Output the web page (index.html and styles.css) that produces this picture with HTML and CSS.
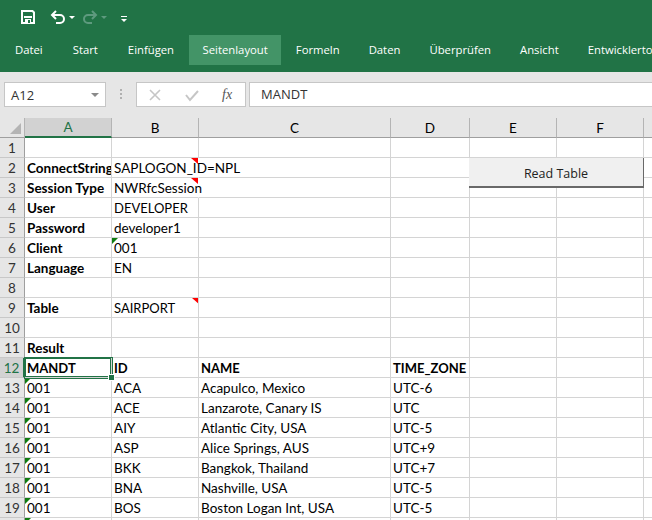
FILE: index.html
```html
<!DOCTYPE html>
<html>
  <head>
    <title>Excel</title>
    <link rel="stylesheet" href="styles.css">
  </head>
  <body>
    <div class="app">
      <!-- Quick access -->
      <div class="quick">
        <svg class="q-save" width="16" height="16" viewBox="0 0 16 16">
          <path d="M2 2h10.5L14 3.5V14H2z" fill="none" stroke="#fff" stroke-width="2"/>
          <rect x="4" y="7" width="8" height="2" fill="#fff"/>
          <rect x="5" y="10" width="6" height="4" fill="#fff"/>
          <rect x="8" y="11" width="2" height="3" fill="#217346"/>
        </svg>
        <svg class="q-undo" width="16" height="14" viewBox="0 0 16 14">
          <path d="M2 5h8a4 4 0 0 1 0 8H6" fill="none" stroke="#fff" stroke-width="2"/>
          <path d="M6 1L2 5l4 4" fill="none" stroke="#fff" stroke-width="2"/>
        </svg>
        <span class="q-arrow"></span>
        <svg class="q-redo" width="16" height="14" viewBox="0 0 16 14">
          <path d="M14 5H6a4 4 0 0 0 0 8h4" fill="none" stroke="#5e9a7e" stroke-width="2"/>
          <path d="M10 1l4 4-4 4" fill="none" stroke="#5e9a7e" stroke-width="2"/>
        </svg>
        <span class="q-arrow dim"></span>
        <span class="q-custom"></span>
      </div>

      <!-- Ribbon tabs -->
      <div class="tabs">
        <span class="tab roomy">Datei</span>
        <span class="tab roomy">Start</span>
        <span class="tab roomy">Einfügen</span>
        <span class="tab active">Seitenlayout</span>
        <span class="tab">Formeln</span>
        <span class="tab">Daten</span>
        <span class="tab">Überprüfen</span>
        <span class="tab">Ansicht</span>
        <span class="tab">Entwicklertools</span>
      </div>

      <!-- Formula bar -->
      <div class="formula-bar">
        <div class="name-box">
          <span>A12</span>
          <span class="name-arrow"></span>
        </div>
        <div class="dots"></div>
        <div class="fx-box">
          <svg width="14" height="14" viewBox="0 0 14 14">
            <path d="M2 2l10 10M12 2L2 12" fill="none" stroke="#c6c6c6" stroke-width="1.6"/>
          </svg>
          <svg width="14" height="14" viewBox="0 0 14 14">
            <path d="M1 7l4 5 8-9" fill="none" stroke="#c6c6c6" stroke-width="2"/>
          </svg>
          <span class="fx">fx</span>
        </div>
        <div class="formula-input">MANDT</div>
      </div>

      <!-- Sheet -->
      <div class="sheet">
        <table class="grid">
          <colgroup>
            <col class="col-rh"><col class="col-a"><col class="col-b"><col class="col-c">
            <col class="col-d"><col class="col-e"><col class="col-f"><col class="col-g">
          </colgroup>
          <tr class="head">
            <th class="corner"><span class="corner-mark"></span></th>
            <th class="sel-col">A</th><th>B</th><th>C</th><th>D</th><th>E</th><th>F</th><th></th>
          </tr>
          <tr><th>1</th><td></td><td></td><td></td><td></td><td></td><td></td><td></td></tr>
          <tr><th>2</th><td class="b">ConnectString</td><td class="over"><span class="txt">SAPLOGON_ID=NPL</span><i class="note"></i></td><td></td><td></td><td></td><td></td><td></td></tr>
          <tr><th>3</th><td class="b">Session Type</td><td class="over"><span class="txt">NWRfcSession</span><i class="note"></i></td><td></td><td></td><td></td><td></td><td></td></tr>
          <tr><th>4</th><td class="b">User</td><td class="caps">DEVELOPER</td><td></td><td></td><td></td><td></td><td></td></tr>
          <tr><th>5</th><td class="b">Password</td><td>developer1</td><td></td><td></td><td></td><td></td><td></td></tr>
          <tr><th>6</th><td class="b">Client</td><td><i class="flag"></i>001</td><td></td><td></td><td></td><td></td><td></td></tr>
          <tr><th>7</th><td class="b">Language</td><td>EN</td><td></td><td></td><td></td><td></td><td></td></tr>
          <tr><th>8</th><td></td><td></td><td></td><td></td><td></td><td></td><td></td></tr>
          <tr><th>9</th><td class="b">Table</td><td class="caps">SAIRPORT<i class="note"></i></td><td></td><td></td><td></td><td></td><td></td></tr>
          <tr><th>10</th><td></td><td></td><td></td><td></td><td></td><td></td><td></td></tr>
          <tr><th>11</th><td class="b">Result</td><td></td><td></td><td></td><td></td><td></td><td></td></tr>
          <tr><th class="sel-row">12</th><td class="b caps selected">MANDT<i class="handle"></i></td><td class="b caps">ID</td><td class="b caps">NAME</td><td class="b caps">TIME_ZONE</td><td></td><td></td><td></td></tr>
          <tr><th>13</th><td><i class="flag"></i>001</td><td>ACA</td><td>Acapulco, Mexico</td><td>UTC-6</td><td></td><td></td><td></td></tr>
          <tr><th>14</th><td><i class="flag"></i>001</td><td>ACE</td><td>Lanzarote, Canary IS</td><td>UTC</td><td></td><td></td><td></td></tr>
          <tr><th>15</th><td><i class="flag"></i>001</td><td>AIY</td><td>Atlantic City, USA</td><td>UTC-5</td><td></td><td></td><td></td></tr>
          <tr><th>16</th><td><i class="flag"></i>001</td><td>ASP</td><td>Alice Springs, AUS</td><td>UTC+9</td><td></td><td></td><td></td></tr>
          <tr><th>17</th><td><i class="flag"></i>001</td><td>BKK</td><td>Bangkok, Thailand</td><td>UTC+7</td><td></td><td></td><td></td></tr>
          <tr><th>18</th><td><i class="flag"></i>001</td><td>BNA</td><td>Nashville, USA</td><td>UTC-5</td><td></td><td></td><td></td></tr>
          <tr><th>19</th><td><i class="flag"></i>001</td><td>BOS</td><td>Boston Logan Int, USA</td><td>UTC-5</td><td></td><td></td><td></td></tr>
          <tr><th></th><td><i class="flag"></i></td><td></td><td></td><td></td><td></td><td></td><td></td></tr>
        </table>
        <button class="read-btn">Read Table</button>
      </div>
    </div>
  </body>
</html>
```

FILE: styles.css
```css
html,
body {
  margin: 0;
  height: 100%;
  overflow: hidden;
}

body {
  background-color: #fff;
  font-family: "Open Sans", sans-serif;
}

.app {
  width: 652px;
  height: 520px;
  display: flex;
  flex-direction: column;
  overflow: hidden;
}

/* Quick access */
.quick {
  height: 35px;
  background-color: #217346;
  display: flex;
  align-items: center;
  padding-left: 20px;
  box-sizing: border-box;
  padding-bottom: 1px;
}

.q-undo {
  margin-left: 14px;
}

.q-redo {
  margin-left: 7px;
}

.q-arrow {
  width: 0;
  height: 0;
  margin-left: 3px;
  border: 3px solid transparent;
  border-top: 3px solid #fff;
  border-bottom: none;
}

.q-arrow.dim {
  border-top-color: #5e9a7e;
}

.q-custom {
  width: 6px;
  height: 1px;
  margin-left: 14px;
  border-top: 1px solid #fff;
  position: relative;
}

.q-custom::after {
  content: "";
  position: absolute;
  left: 0;
  top: 2px;
  border: 3px solid transparent;
  border-top: 3px solid #fff;
  border-bottom: none;
}

/* Ribbon tabs */
.tabs {
  height: 37px;
  background-color: #217346;
  display: flex;
  align-items: stretch;
  box-sizing: border-box;
  padding-bottom: 7px;
  white-space: nowrap;
}

.tab {
  color: #fff;
  font-size: 11.3px;
  line-height: 30px;
  padding: 0 14.5px;
}

.tab.roomy {
  padding: 0 15px;
}

.tab.active {
  background-color: #439467;
  padding: 0 13.5px;
}

/* Formula bar */
.formula-bar {
  height: 46px;
  background-color: #e6e6e6;
  display: flex;
  padding: 10px 0 11px 4px;
  box-sizing: border-box;
}

.name-box {
  width: 102px;
  box-sizing: border-box;
  background-color: #fff;
  border: 1px solid #c6c6c6;
  display: flex;
  align-items: center;
  justify-content: space-between;
  padding: 0 3px 0 6px;
  font-size: 13px;
  color: #333;
}

.name-arrow {
  width: 0;
  height: 0;
  margin-right: 3px;
  border: 4px solid transparent;
  border-top: 4px solid #8a8a8a;
  border-bottom: none;
}

.dots {
  width: 2px;
  height: 11px;
  margin: 7px 14px 0 14px;
  background-image: linear-gradient(#b0b0b0 2px, transparent 2px);
  background-size: 2px 4px;
}

.fx-box {
  width: 110px;
  box-sizing: border-box;
  background-color: #fff;
  border: 1px solid #c6c6c6;
  display: flex;
  align-items: center;
  gap: 23px;
  padding-left: 11px;
}

.fx {
  font-family: "Liberation Serif", serif;
  font-style: italic;
  font-size: 14px;
  color: #555;
}

.formula-input {
  flex: 1;
  margin-left: 3px;
  background-color: #fff;
  border: 1px solid #c6c6c6;
  border-right: none;
  padding-left: 11px;
  font-size: 13px;
  line-height: 23px;
  color: #333;
}

/* Sheet */
.sheet {
  position: relative;
  flex: 1;
  overflow: hidden;
}

.grid {
  table-layout: fixed;
  border-collapse: separate;
  border-spacing: 0;
  width: 660px;
  font-family: Lato, sans-serif;
  font-size: 13.5px;
  color: #000;
}

.col-rh { width: 25px; }
.col-a { width: 87px; }
.col-b { width: 87px; }
.col-c { width: 192px; }
.col-d { width: 79px; }
.col-e { width: 87px; }
.col-f { width: 87px; }
.col-g { width: 16px; }

.grid tr {
  height: 20px;
}

.grid td,
.grid th {
  box-sizing: border-box;
  height: 20px;
  padding: 0;
  position: relative;
  white-space: nowrap;
  overflow: hidden;
}

.grid td {
  padding-left: 2px;
  border-right: 1px solid #d4d4d4;
  border-bottom: 1px solid #d4d4d4;
}

.grid th {
  background-color: #e6e6e6;
  font-weight: normal;
  text-align: center;
  color: #333;
  border-right: 1px solid #9f9f9f;
  border-bottom: 1px solid #c8c8c8;
}

.head th {
  border-right: 1px solid #b4b4b4;
  border-bottom: 1px solid #9f9f9f;
  color: #000;
}

.b {
  font-weight: bold;
}

.grid td.caps {
  font-size: 13px;
}

.grid td.over {
  overflow: visible;
  border-right-color: #fff;
}

.txt {
  position: relative;
  z-index: 1;
}

.grid th.sel-col {
  background-color: #d2d2d2;
  color: #217346;
  border-bottom: 2px solid #217346;
}

.grid th.sel-row {
  background-color: #d2d2d2;
  color: #217346;
  border-right: 2px solid #217346;
}

.corner-mark {
  position: absolute;
  right: 3px;
  bottom: 3px;
  border-left: 11px solid transparent;
  border-bottom: 11px solid #b4b4b4;
}

.note {
  position: absolute;
  right: -1px;
  top: 0;
  z-index: 2;
  border-left: 7px solid transparent;
  border-top: 6px solid #ff0000;
}

.over .note {
  right: 0;
}

.flag {
  position: absolute;
  left: 0;
  top: 0;
  border-right: 6px solid transparent;
  border-top: 6px solid #107c10;
}

.grid td.selected {
  overflow: visible;
  box-shadow: 0 0 0 1px #217346, inset 0 0 0 1px #217346;
  z-index: 3;
}

.handle {
  position: absolute;
  right: -4px;
  bottom: -4px;
  width: 5px;
  height: 5px;
  background-color: #217346;
  border: 1px solid #fff;
}

.read-btn {
  position: absolute;
  left: 469px;
  top: 40px;
  width: 175px;
  height: 30px;
  margin: 0;
  padding: 2px 0 0;
  box-sizing: border-box;
  background-color: #f0f0f0;
  border: none;
  border-right: 1px solid #696969;
  border-bottom: 2px solid #696969;
  font-family: "Open Sans", sans-serif;
  font-size: 12.5px;
  color: #222;
}
```
